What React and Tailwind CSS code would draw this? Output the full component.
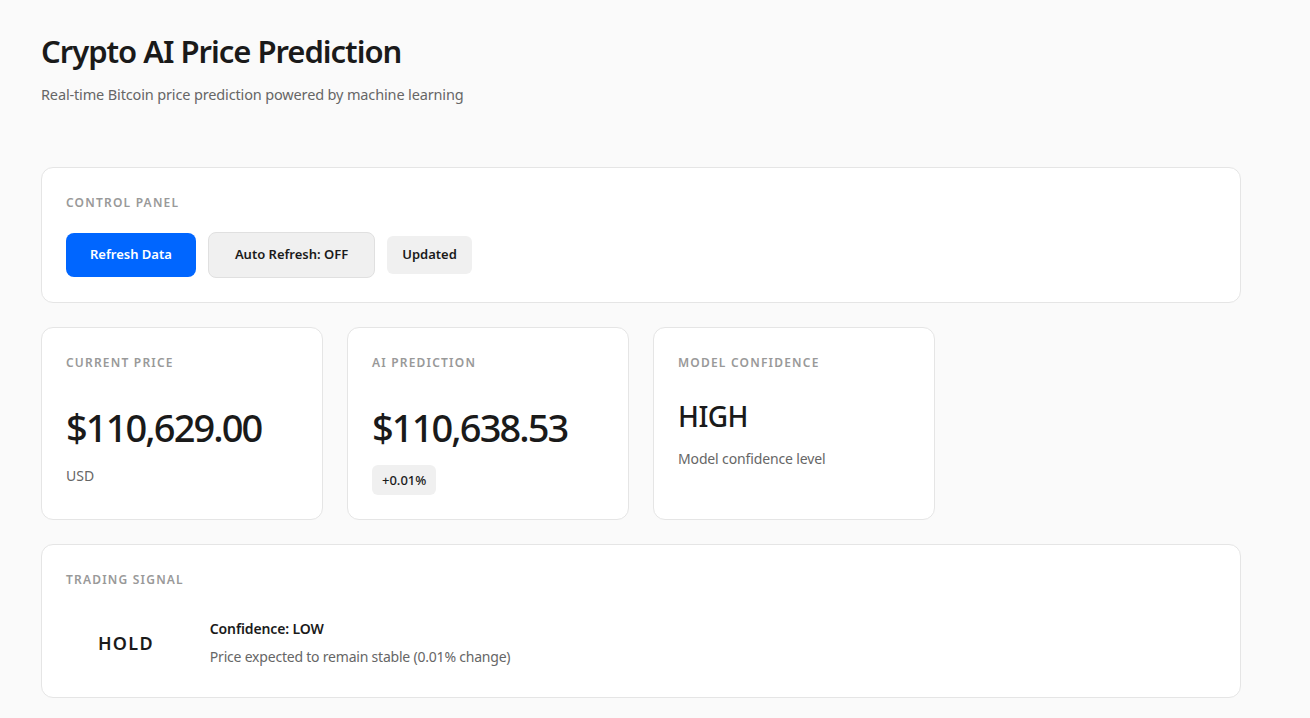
import React from 'react';

const font = { fontFamily: '"Noto Sans", "Open Sans", sans-serif' };

const Label = ({ children }) => (
  <div className="text-[12px] leading-[21px] font-semibold uppercase tracking-[0.1em] text-[#999]">
    {children}
  </div>
);

const Card = ({ children, className = '' }) => (
  <div className={`bg-white border border-[#e5e5e5] rounded-xl p-6 ${className}`}>{children}</div>
);

export default function App() {
  return (
    <div className="min-h-screen bg-[#fafafa] text-[#1a1a1a]" style={font}>
      <div className="w-[1200px] ml-[41px] pt-[32px] pb-6">
        {/* Header */}
        <header className="mb-[62px]">
          <h1 className="text-[31px] leading-[38px] font-semibold tracking-[-0.033em]">Crypto AI Price Prediction</h1>
          <p className="mt-[13px] text-[14.5px] leading-[22px] text-[#666] tracking-[-0.01em]">
            Real-time Bitcoin price prediction powered by machine learning
          </p>
        </header>

        {/* Control panel */}
        <Card className="mb-6">
          <Label>Control Panel</Label>
          <div className="mt-[19px] flex items-center gap-3">
            <button className="h-[44px] px-6 rounded-lg bg-[#0066ff] text-white text-[13px] font-semibold">
              Refresh Data
            </button>
            <button className="h-[46px] px-[26px] rounded-lg bg-[#f0f0f0] border border-[#e0e0e0] text-[13px] font-semibold text-[#1a1a1a]">
              Auto Refresh: OFF
            </button>
            <span className="h-[38px] px-[15px] flex items-center rounded-md bg-[#f0f0f0] text-[13px] font-semibold text-[#1a1a1a]">
              Updated
            </span>
          </div>
        </Card>

        {/* Stats */}
        <div className="grid grid-cols-4 gap-6 mb-6">
          <Card>
            <Label>Current Price</Label>
            <div className="mt-[30px] text-[38px] leading-[48px] font-medium tracking-[-0.05em]">$110,629.00</div>
            <div className="mt-[15px] text-[14px] leading-[20px] text-[#666]">USD</div>
          </Card>
          <Card>
            <Label>AI Prediction</Label>
            <div className="mt-[30px] text-[38px] leading-[48px] font-medium tracking-[-0.05em]">$110,638.53</div>
            <div className="mt-[14px]">
              <span className="inline-block px-[10px] py-[5px] rounded-md bg-[#f0f0f0] text-[13px] leading-[20px] font-medium">
                +0.01%
              </span>
            </div>
          </Card>
          <Card>
            <Label>Model Confidence</Label>
            <div className="mt-[23px] text-[28px] leading-[40px] font-medium tracking-[-0.02em]">HIGH</div>
            <div className="mt-[13px] text-[14px] leading-[20px] text-[#666] tracking-[-0.01em]">Model confidence level</div>
          </Card>
        </div>

        {/* Trading signal */}
        <Card>
          <Label>Trading Signal</Label>
          <div className="mt-[23px] flex items-center gap-6">
            <div className="px-8 py-4 text-[18px] leading-[28px] font-semibold tracking-[0.07em]">HOLD</div>
            <div>
              <div className="text-[14px] leading-[20px] font-semibold tracking-[-0.01em]">Confidence: LOW</div>
              <div className="mt-2 text-[14px] leading-[20px] text-[#666] tracking-[-0.015em]">
                Price expected to remain stable (0.01% change)
              </div>
            </div>
          </div>
        </Card>
      </div>
    </div>
  );
}
